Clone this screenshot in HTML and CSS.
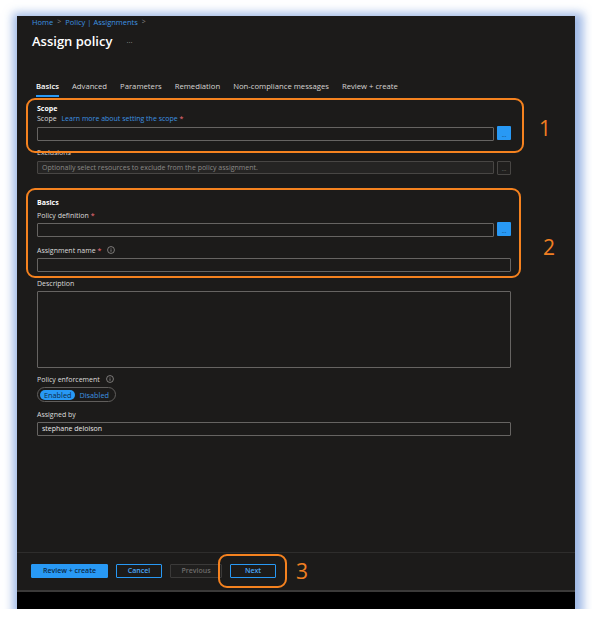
FILE: index.html
```html
<!DOCTYPE html>
<html lang="en">
<head>
<meta charset="utf-8">
<title>Assign policy</title>
<link rel="stylesheet" href="styles.css">
</head>
<body>
<div class="frame">
  <div class="panel">
    <div class="main">
      <div class="breadcrumb">
        <span class="crumb">Home</span><span class="sep">&gt;</span><span class="crumb">Policy | Assignments</span><span class="sep">&gt;</span>
      </div>
      <div class="title-row">
        <h1 class="title">Assign policy</h1>
        <span class="more">···</span>
      </div>
      <nav class="tabs">
        <span class="tab active">Basics</span>
        <span class="tab">Advanced</span>
        <span class="tab">Parameters</span>
        <span class="tab">Remediation</span>
        <span class="tab">Non-compliance messages</span>
        <span class="tab">Review + create</span>
      </nav>

      <div class="form">
        <div class="section-title first">Scope</div>
        <div class="label">Scope <span class="link">Learn more about setting the scope</span> <span class="req">*</span></div>
        <div class="field-row">
          <div class="input grow"></div>
          <div class="pick"><span>...</span></div>
        </div>

        <div class="label gap-7">Exclusions</div>
        <div class="field-row">
          <div class="input grow disabled">Optionally select resources to exclude from the policy assignment.</div>
          <div class="pick off"><span>...</span></div>
        </div>

        <div class="section-title gap-23">Basics</div>
        <div class="label gap-3">Policy definition <span class="req">*</span></div>
        <div class="field-row tight">
          <div class="input grow"></div>
          <div class="pick"><span>...</span></div>
        </div>

        <div class="label gap-9">Assignment name <span class="req">*</span> <svg class="info" viewBox="0 0 10 10" width="8" height="8"><circle cx="5" cy="5" r="4.3" fill="none" stroke="#a19f9d" stroke-width="0.9"/><rect x="4.55" y="4.2" width="0.9" height="3" fill="#a19f9d"/><circle cx="5" cy="3" r="0.55" fill="#a19f9d"/></svg></div>
        <div class="input full tight"></div>

        <div class="label gap-7">Description</div>
        <div class="textarea tight"></div>

        <div class="label gap-7">Policy enforcement <svg class="info" viewBox="0 0 10 10" width="8" height="8"><circle cx="5" cy="5" r="4.3" fill="none" stroke="#a19f9d" stroke-width="0.9"/><rect x="4.55" y="4.2" width="0.9" height="3" fill="#a19f9d"/><circle cx="5" cy="3" r="0.55" fill="#a19f9d"/></svg></div>
        <div class="toggle tight">
          <span class="opt on">Enabled</span><span class="opt">Disabled</span>
        </div>

        <div class="label gap-8">Assigned by</div>
        <div class="input full tight value">stephane deloison</div>
      </div>
    </div>

    <div class="footer">
      <button class="btn primary">Review + create</button>
      <button class="btn outline w-cancel">Cancel</button>
      <button class="btn ghost">Previous</button>
      <button class="btn outline w-next">Next</button>
    </div>
  </div>

  <div class="callout box1"></div>
  <div class="callout box2"></div>
  <div class="callout box3"></div>
  <span class="num n1">1</span>
  <span class="num n2">2</span>
  <span class="num n3">3</span>
</div>
</body>
</html>
```

FILE: styles.css
```css
* { box-sizing: border-box; }
html, body { margin: 0; padding: 0; background: #ffffff; }
body {
  font-family: "Open Sans", "Noto Sans", sans-serif;
  font-size: 7px;
  color: #dcdcdc;
}

.frame {
  position: relative;
  margin: 16px 0 0 17px;
  width: 558px;
  height: 593px;
  background: #000;
  box-shadow: 2px 3px 9px 6px rgba(125, 160, 220, 0.75);
}

.panel {
  height: 576px;
  background: #1c1b1a;
  border-bottom: 2px solid #3b3a39;
  display: flex;
  flex-direction: column;
}

.main { flex: 1; padding-left: 15px; }

.breadcrumb {
  height: 12px;
  line-height: 12px;
  font-size: 7.5px;
  display: flex;
  align-items: center;
}
.crumb { color: #3d92e0; }
.sep { color: #8a8886; margin: 0 4px; font-size: 7px; }

.title-row {
  margin-top: 4px;
  height: 18px;
  display: flex;
  align-items: center;
}
.title {
  margin: 0;
  font-size: 13px;
  font-weight: 600;
  color: #ffffff;
  line-height: 18px;
}
.more { color: #a19f9d; margin-left: 14px; font-size: 8px; }

.tabs {
  margin-top: 29px;
  padding-left: 4px;
  display: flex;
  gap: 13px;
}
.tab {
  line-height: 14px;
  padding-bottom: 2px;
  border-bottom: 2px solid transparent;
  color: #d8d6d4;
  font-size: 7.7px;
}
.tab.active {
  color: #ffffff;
  font-weight: 600;
  border-bottom-color: #2899f5;
}

.form { padding-left: 5px; width: 479px; }

.section-title {
  line-height: 10px;
  font-weight: 700;
  color: #ffffff;
}
.section-title.first { margin-top: 7px; }
.label {
  line-height: 10px;
  color: #dcdcdc;
}
.link { color: #3d92e0; margin-left: 3px; }
.req { color: #f1707b; }
.info { vertical-align: -1px; margin-left: 4px; }

.gap-3 { margin-top: 3px; }
.gap-7 { margin-top: 7px; }
.gap-8 { margin-top: 8px; }
.gap-9 { margin-top: 9px; }
.gap-23 { margin-top: 23px; }

.field-row {
  margin-top: 3px;
  display: flex;
  align-items: flex-start;
  gap: 3px;
}
.field-row.tight, .tight { margin-top: 2px; }

.input {
  height: 14px;
  border: 1px solid #666462;
  border-radius: 1px;
  background: #1c1b1a;
  line-height: 12px;
  padding-left: 4px;
}
.input.grow { flex: 1; }
.input.full { width: 474px; }
.input.disabled {
  height: 13px;
  line-height: 11px;
  background: #252423;
  border-color: #484644;
  color: #8a8886;
}
.input.value { color: #e8e8e8; }

.pick {
  width: 14px;
  height: 14px;
  margin-top: -1px;
  background: #2899f5;
  border-radius: 1px;
  display: flex;
  align-items: flex-end;
  justify-content: center;
  color: #0c2a46;
  font-size: 6px;
  line-height: 9px;
}
.pick.off {
  background: #201f1e;
  border: 1px solid #484644;
  color: #8a8886;
  margin-top: 0;
}

.textarea {
  width: 474px;
  height: 77px;
  border: 1px solid #666462;
  border-radius: 1px;
}

.toggle {
  display: inline-flex;
  align-items: center;
  height: 15px;
  padding: 0 2px;
  border: 1px solid #605e5c;
  border-radius: 8px;
}
.opt {
  color: #3d92e0;
  line-height: 10px;
  padding: 0 4px;
  border-radius: 5px;
  font-size: 7.3px;
}
.opt.on { background: #2899f5; color: #0c2a46; }

.footer {
  height: 38px;
  border-top: 1px solid #2e2d2c;
  padding: 11px 0 0 14px;
  display: flex;
  gap: 8px;
  align-items: flex-start;
}
.btn {
  height: 14px;
  padding: 0;
  font-family: inherit;
  font-size: 7px;
  font-weight: 600;
  border-radius: 1px;
  background: transparent;
  line-height: 12px;
}
.btn.primary { width: 77px; background: #2899f5; border: 1px solid #2899f5; color: #0c2a46; }
.btn.outline { border: 1px solid #2899f5; color: #4aa8f7; }
.w-cancel { width: 46px; }
.w-next { width: 46px; }
.btn.ghost { width: 52px; border: 1px solid #3b3a39; color: #6e6c6a; background: #201f1e; }

.callout {
  position: absolute;
  border: 2px solid #f5821f;
  border-radius: 9px;
}
.box1 { left: 9px; top: 82px; width: 498px; height: 55px; }
.box2 { left: 9px; top: 172px; width: 495px; height: 90px; }
.box3 { left: 201px; top: 538px; width: 69px; height: 34px; }

.num {
  position: absolute;
  color: #f07f22;
  font-family: "Open Sans", sans-serif;
  font-size: 21px;
  line-height: 21px;
}
.n1 { left: 522px; top: 102px; }
.n2 { left: 526px; top: 221px; }
.n3 { left: 279px; top: 545px; }
```
